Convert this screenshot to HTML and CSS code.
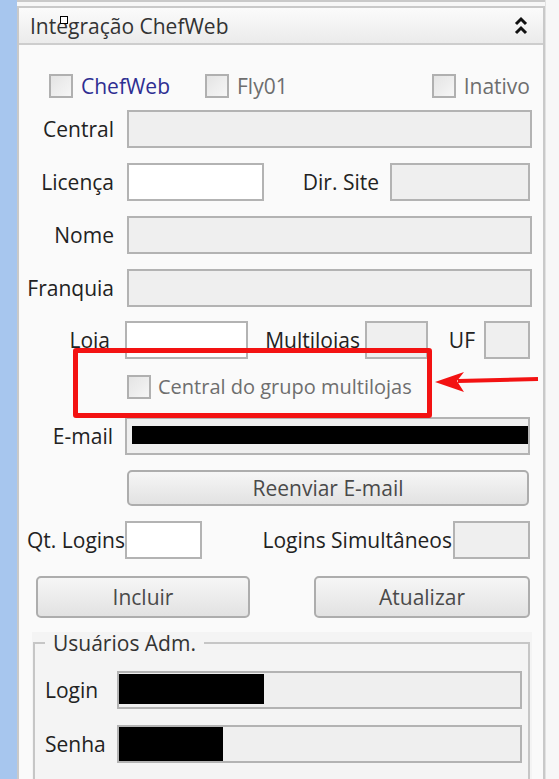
FILE: index.html
```html
<!DOCTYPE html>
<html lang="pt-br">
    <head>
        <meta charset="utf-8" />
        <title>Integração ChefWeb</title>
        <link rel="stylesheet" href="styles.css">
    </head>
    <body>
      <div id="janela">
        <div class="faixa"></div>
        <div class="coluna">
          <div class="painel-anterior"></div>
          <div class="painel">
            <div class="cabecalho">
              <span class="titulo">Integração ChefWeb</span>
              <svg class="recolher" width="14" height="20" viewBox="0 0 14 20">
                <path d="M2 8 L7 3 L12 8" />
                <path d="M2 17 L7 12 L12 17" />
              </svg>
            </div>
            <div class="corpo">
              <div class="linha checks">
                <label class="check chefweb"><span class="caixa"></span>ChefWeb</label>
                <label class="check apagado fly"><span class="caixa"></span>Fly01</label>
                <label class="check apagado inativo"><span class="caixa"></span>Inativo</label>
              </div>
              <div class="linha central">
                <span class="rotulo">Central</span>
                <span class="campo bloqueado cheio"></span>
              </div>
              <div class="linha">
                <span class="rotulo">Licença</span>
                <span class="campo licenca"></span>
                <span class="texto dir-site">Dir. Site</span>
                <span class="campo bloqueado site"></span>
              </div>
              <div class="linha">
                <span class="rotulo">Nome</span>
                <span class="campo bloqueado cheio"></span>
              </div>
              <div class="linha">
                <span class="rotulo">Franquia</span>
                <span class="campo bloqueado cheio"></span>
              </div>
              <div class="linha loja">
                <span class="rotulo">Loja</span>
                <span class="campo loja-campo"></span>
                <span class="texto multi">Multilojas</span>
                <span class="campo bloqueado multi-campo"></span>
                <span class="texto uf">UF</span>
                <span class="campo bloqueado uf-campo"></span>
              </div>
              <div class="linha grupo-multi">
                <label class="check apagado"><span class="caixa"></span>Central do grupo multilojas</label>
              </div>
              <div class="linha email">
                <span class="rotulo">E-mail</span>
                <span class="campo bloqueado email-campo"><span class="tarja"></span></span>
              </div>
              <div class="linha reenviar">
                <button class="botao">Reenviar E-mail</button>
              </div>
              <div class="linha logins">
                <span class="rotulo qt">Qt. Logins</span>
                <span class="campo qt-campo"></span>
                <span class="texto simultaneos">Logins Simultâneos</span>
                <span class="campo bloqueado sim-campo"></span>
              </div>
              <div class="linha acoes">
                <button class="botao incluir">Incluir</button>
                <button class="botao atualizar">Atualizar</button>
              </div>
              <div class="area-grupo">
                <fieldset class="grupo">
                  <legend>Usuários Adm.</legend>
                  <div class="linha adm primeira">
                    <span class="rotulo-adm">Login</span>
                    <span class="campo bloqueado adm-campo"><span class="tarja login"></span></span>
                  </div>
                  <div class="linha adm">
                    <span class="rotulo-adm">Senha</span>
                    <span class="campo bloqueado adm-campo"><span class="tarja senha"></span></span>
                  </div>
                </fieldset>
              </div>
            </div>
          </div>
        </div>
        <div class="margem"></div>

        <!-- marcacao vermelha por cima do print -->
        <div class="destaque"></div>
        <svg class="seta" width="115" height="32" viewBox="0 0 115 32">
          <path d="M108 14 L28 16" />
          <polygon points="5,17 34,7 27,16 34,27" />
        </svg>
        <div class="cursor"></div>
      </div>
    </body>
</html>
```

FILE: styles.css
```css
* {
    box-sizing: border-box;
}
body {
    margin: 0;
    font-family: "Open Sans", "Liberation Sans", sans-serif;
    font-size: 21px;
    color: #222;
    background: #f4f4f4;
}
#janela {
    position: relative;
    display: flex;
    width: 559px;
    height: 779px;
    overflow: hidden;
}
.faixa {
    flex: none;
    width: 17px;
    background: #a7c6ee;
}
.coluna {
    flex: none;
    width: 528px;
    display: flex;
    flex-direction: column;
    background: #f7f7f7;
}
.margem {
    flex: 1;
    background: #f7f7f7;
    border-left: 1px solid #e2e2e2;
}
.painel-anterior {
    height: 5px;
    border: 2px solid #c9c9c9;
    border-top: 0;
    background: #f8f8f8;
    margin-bottom: 4px;
}
.painel {
    flex: 1;
    display: flex;
    flex-direction: column;
    border: 2px solid #c9c9c9;
    border-bottom: 0;
    background: #fafafa;
}
.cabecalho {
    height: 37px;
    display: flex;
    align-items: center;
    justify-content: space-between;
    padding: 0 15px 0 11px;
    border-bottom: 2px solid #cdcdcd;
    background: linear-gradient(#fbfbfb, #ebebeb);
}
.titulo {
    color: #333;
    font-size: 21px;
}
.recolher path {
    fill: none;
    stroke: #111;
    stroke-width: 3;
}
.corpo {
    padding: 28px 11px 0 0;
}

/* linhas do formulario */
.linha {
    display: flex;
    align-items: center;
    height: 38px;
    margin-top: 15px;
}
.central {
    margin-top: 12px;
}
.rotulo {
    flex: none;
    width: 108px;
    padding-right: 13px;
    text-align: right;
    white-space: nowrap;
}
.texto {
    white-space: nowrap;
}
.campo {
    display: flex;
    align-items: center;
    height: 38px;
    border: 2px solid #b3b3b3;
    background: #fff;
}
.campo.bloqueado {
    background: #efefef;
}
.cheio {
    flex: 1;
}

.checks {
    height: 25px;
    margin-top: 0;
    padding-left: 30px;
}
.check {
    display: flex;
    align-items: center;
    white-space: nowrap;
}
.caixa {
    flex: none;
    width: 24px;
    height: 24px;
    margin-right: 8px;
    border: 2px solid #b0b0b0;
    background: linear-gradient(135deg, #e4e4e4, #f6f6f6);
}
.chefweb {
    width: 156px;
    color: #2e2e92;
}
.apagado {
    color: #6e6e6e;
}
.inativo {
    margin-left: auto;
    margin-right: 2px;
}

.licenca {
    width: 137px;
}
.dir-site {
    margin-left: auto;
}
.site {
    width: 140px;
    margin-left: 11px;
    margin-right: 2px;
}

.loja {
    margin-top: 14px;
}
.loja .rotulo,
.email .rotulo {
    width: 106px;
    padding-right: 15px;
}
.loja-campo {
    width: 123px;
}
.multi {
    flex: none;
    width: 117px;
    padding-right: 5px;
    text-align: right;
}
.multi-campo {
    width: 63px;
}
.uf {
    flex: none;
    width: 56px;
    padding-right: 9px;
    text-align: right;
}
.uf-campo {
    width: 46px;
    margin-right: 2px;
}

.grupo-multi {
    height: 25px;
    padding-left: 108px;
    font-size: 20px;
}
.grupo-multi .caixa {
    margin-right: 7px;
}

.email {
    margin-top: 18px;
}
.email .rotulo {
    padding-right: 12px;
}
.email-campo {
    flex: 1;
    margin-right: 2px;
}
.tarja {
    display: block;
    background: #000;
}
.email-campo .tarja {
    flex: 1;
    height: 18px;
    margin-left: 5px;
    margin-top: -2px;
}

.botao {
    height: 36px;
    border: 2px solid #adadad;
    border-radius: 5px;
    background: linear-gradient(#f6f6f6, #e2e2e2);
    color: #4a4a4a;
    font-family: inherit;
    font-size: 21px;
    padding: 0;
}
.reenviar {
    height: 36px;
}
.reenviar .botao {
    flex: 1;
    margin-left: 108px;
    margin-right: 3px;
}

.qt {
    width: 106px;
    padding: 0 0 0 8px;
    text-align: left;
    overflow: hidden;
}
.qt-campo {
    width: 77px;
}
.simultaneos {
    margin-left: auto;
}
.sim-campo {
    width: 77px;
    margin-left: 1px;
    margin-right: 2px;
}

.acoes {
    height: 42px;
    margin-top: 17px;
}
.acoes .botao {
    height: 42px;
}
.incluir {
    width: 214px;
    margin-left: 17px;
}
.atualizar {
    width: 216px;
    margin-left: auto;
    margin-right: 2px;
}

/* grupo Usuarios Adm. */
.area-grupo {
    margin: 14px 0 0 13px;
    padding: 0 2px 0 1px;
    height: 160px;
    background: #f4f4f4;
}
.grupo {
    margin: 0;
    padding: 0 0 0 10px;
    height: 100%;
    border: 2px solid #c6c6c6;
}
.grupo legend {
    padding: 0 8px;
    line-height: 22px;
    color: #333;
}
.adm {
    margin-top: 16px;
}
.adm.primeira {
    margin-top: 17px;
}
.rotulo-adm {
    width: 72px;
    flex: none;
}
.adm-campo {
    flex: 1;
    margin-right: 6px;
    align-items: flex-start;
}
.tarja.login {
    width: 145px;
    height: 30px;
    margin-top: 1px;
}
.tarja.senha {
    width: 104px;
    height: 34px;
}

/* anotacoes sobre a imagem */
.destaque {
    position: absolute;
    left: 73px;
    top: 348px;
    width: 359px;
    height: 70px;
    border: 5px solid #f31212;
    border-radius: 3px;
}
.seta {
    position: absolute;
    left: 430px;
    top: 365px;
}
.seta path {
    stroke: #f31212;
    stroke-width: 4;
    fill: none;
}
.seta polygon {
    fill: #f31212;
}
.cursor {
    position: absolute;
    left: 60px;
    top: 16px;
    width: 8px;
    height: 8px;
    border: 1px solid #000;
    background: #fff;
}
```
